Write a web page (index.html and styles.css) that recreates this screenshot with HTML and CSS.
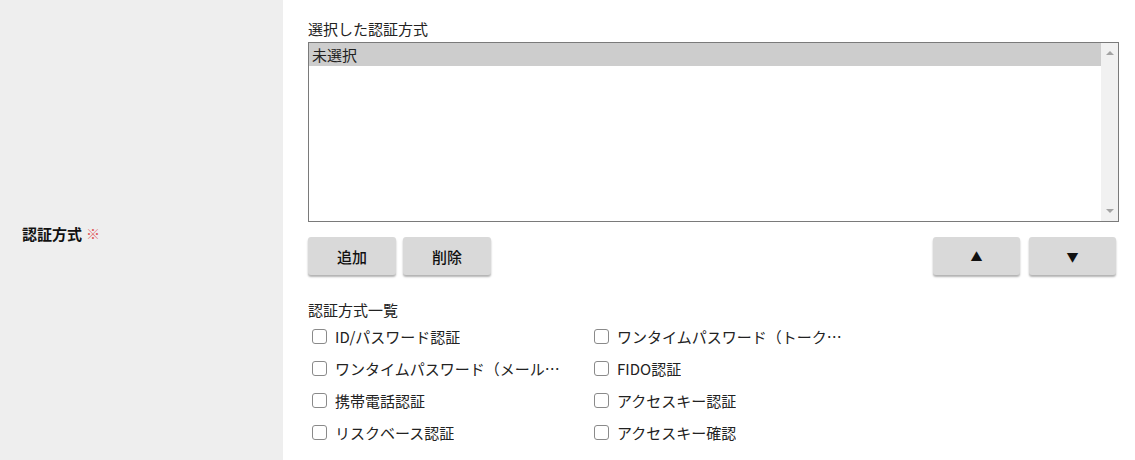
FILE: index.html
```html
<!DOCTYPE html>
<html lang="ja">
<head>
<meta charset="utf-8">
<link rel="stylesheet" href="styles.css">
</head>
<body>
<div class="row">
  <div class="label-col">
    <span class="label">認証方式</span><span class="req">※</span>
  </div>
  <div class="field-col">
    <div class="caption">選択した認証方式</div>
    <div class="listbox">
      <div class="options">
        <div class="option selected">未選択</div>
      </div>
      <div class="scrollbar">
        <span class="arrow up"></span>
        <span class="arrow down"></span>
      </div>
    </div>
    <div class="buttons">
      <div class="group">
        <button class="btn">追加</button>
        <button class="btn">削除</button>
      </div>
      <div class="group wide">
        <button class="btn tri">▲</button>
        <button class="btn tri">▼</button>
      </div>
    </div>
    <div class="caption list-caption">認証方式一覧</div>
    <div class="checks">
      <label class="check"><span class="box"></span><span class="text">ID/パスワード認証</span></label>
      <label class="check"><span class="box"></span><span class="text">ワンタイムパスワード（トークン）認証</span></label>
      <label class="check"><span class="box"></span><span class="text">ワンタイムパスワード（メール）認証</span></label>
      <label class="check"><span class="box"></span><span class="text">FIDO認証</span></label>
      <label class="check"><span class="box"></span><span class="text">携帯電話認証</span></label>
      <label class="check"><span class="box"></span><span class="text">アクセスキー認証</span></label>
      <label class="check"><span class="box"></span><span class="text">リスクベース認証</span></label>
      <label class="check"><span class="box"></span><span class="text">アクセスキー確認</span></label>
    </div>
  </div>
</div>
</body>
</html>
```

FILE: styles.css
```css
html, body {
  margin: 0;
  padding: 0;
  background: #ffffff;
}
body {
  font-family: "Noto Sans CJK JP", "Noto Sans", sans-serif;
  font-size: 15px;
  color: #222222;
}
.row {
  display: flex;
  height: 460px;
}
.label-col {
  width: 283px;
  flex: none;
  background: #eeeeee;
  display: flex;
  align-items: center;
  padding-left: 22px;
  box-sizing: border-box;
  padding-top: 6px;
}
.label {
  font-weight: bold;
  font-size: 15px;
  color: #111111;
}
.req {
  color: #e05a5a;
  font-size: 14px;
  margin-left: 4px;
}
.field-col {
  flex: 1;
  padding: 18px 16px 0 25px;
  display: flex;
  flex-direction: column;
}
.caption {
  line-height: 22px;
  height: 22px;
  margin-bottom: 2px;
}
.listbox {
  height: 180px;
  border: 1px solid #7a7a7a;
  display: flex;
  box-sizing: border-box;
}
.options {
  flex: 1;
}
.option {
  height: 23px;
  line-height: 23px;
  padding-left: 3px;
}
.option.selected {
  background: #cdcdcd;
}
.scrollbar {
  width: 17px;
  background: #f1f1f1;
  display: flex;
  flex-direction: column;
  justify-content: space-between;
  align-items: center;
  padding: 8px 0;
  box-sizing: border-box;
}
.arrow {
  width: 0;
  height: 0;
  border-left: 4px solid transparent;
  border-right: 4px solid transparent;
}
.arrow.up {
  border-bottom: 4px solid #a3a3a3;
}
.arrow.down {
  border-top: 4px solid #a3a3a3;
}
.buttons {
  display: flex;
  justify-content: space-between;
  margin-top: 15px;
  padding-right: 3px;
}
.group {
  display: flex;
  gap: 7px;
}
.group.wide {
  gap: 9px;
}
.btn {
  width: 88px;
  height: 38px;
  border: none;
  border-radius: 3px;
  background: #d9d9d9;
  box-shadow: 0 2px 2px rgba(0, 0, 0, 0.3);
  font-family: "Noto Sans CJK JP", "Noto Sans", sans-serif;
  font-size: 15px;
  font-weight: 500;
  color: #111111;
  padding: 0;
}
.btn.tri {
  width: 87px;
  font-size: 12px;
}
.list-caption {
  margin-top: 24px;
  margin-bottom: 0;
}
.checks {
  display: grid;
  grid-template-columns: 282px 282px;
  grid-auto-rows: 32px;
  margin-top: -1px;
}
.check {
  display: flex;
  align-items: center;
  padding-left: 4px;
  min-width: 0;
}
.box {
  width: 15px;
  height: 15px;
  box-sizing: border-box;
  border: 1.5px solid #8a8a8a;
  border-radius: 3px;
  background: #ffffff;
  margin-right: 8px;
  flex: none;
}
.check .text {
  white-space: nowrap;
  overflow: hidden;
  text-overflow: ellipsis;
  max-width: 228px;
}
```
